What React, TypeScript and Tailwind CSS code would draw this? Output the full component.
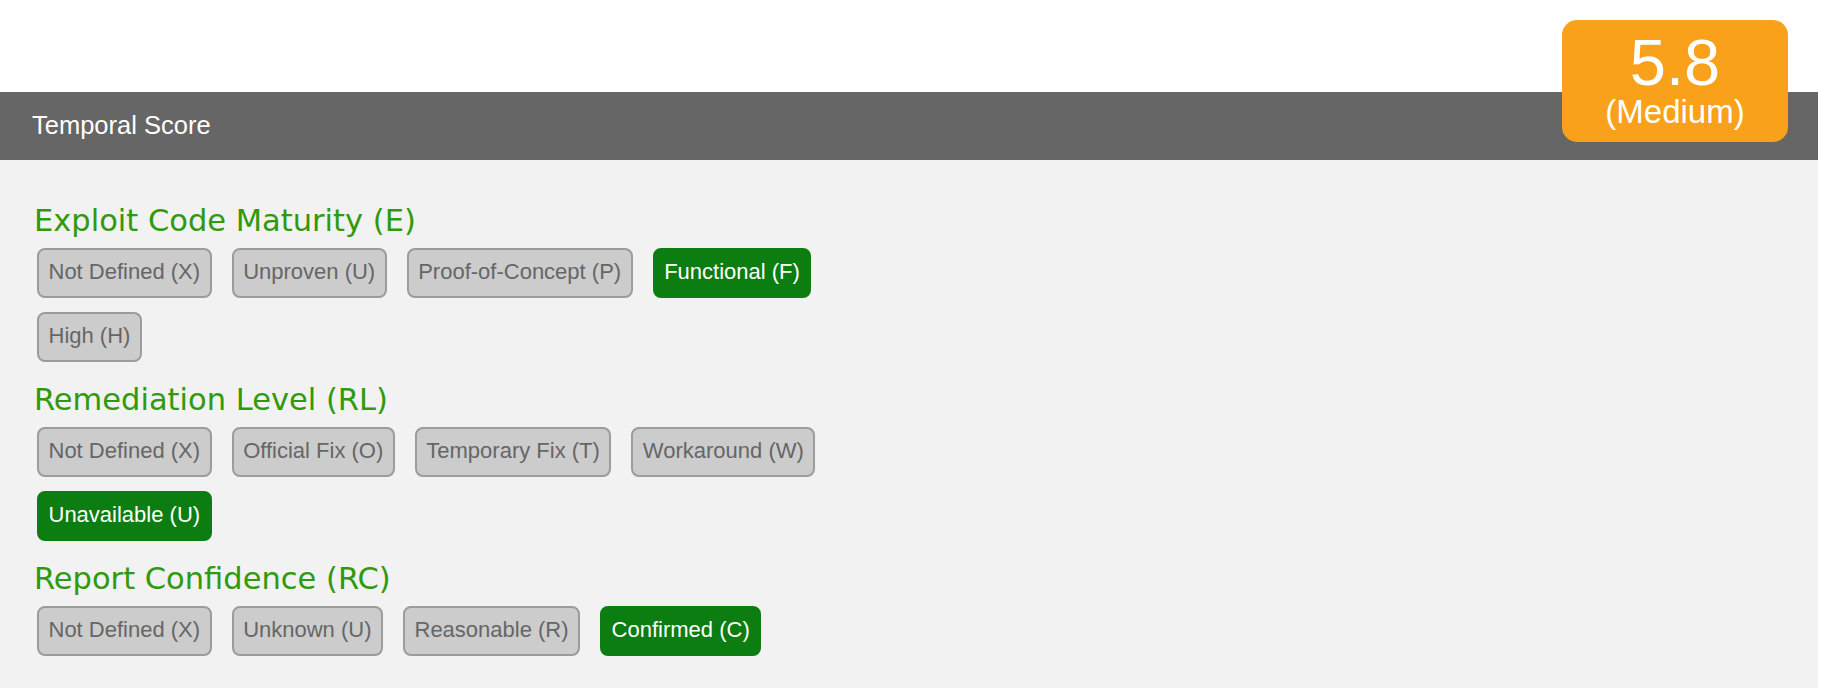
import React from "react";

type Opt = { label: string; active?: boolean };

const sections: { title: string; options: Opt[] }[] = [
  {
    title: "Exploit Code Maturity (E)",
    options: [
      { label: "Not Defined (X)" },
      { label: "Unproven (U)" },
      { label: "Proof-of-Concept (P)" },
      { label: "Functional (F)", active: true },
      { label: "High (H)" },
    ],
  },
  {
    title: "Remediation Level (RL)",
    options: [
      { label: "Not Defined (X)" },
      { label: "Official Fix (O)" },
      { label: "Temporary Fix (T)" },
      { label: "Workaround (W)" },
      { label: "Unavailable (U)", active: true },
    ],
  },
  {
    title: "Report Confidence (RC)",
    options: [
      { label: "Not Defined (X)" },
      { label: "Unknown (U)" },
      { label: "Reasonable (R)" },
      { label: "Confirmed (C)", active: true },
    ],
  },
];

function OptionButton({ label, active }: Opt) {
  return (
    <div
      className={
        active
          ? "flex h-[50.5px] items-center rounded-[8px] border-2 border-[#0c7d10] bg-[#0c7d10] px-[9.5px] pb-[3px] text-[22px] leading-[25px] text-white whitespace-nowrap"
          : "flex h-[50.5px] items-center rounded-[8px] border-2 border-[#9c9c9c] bg-[#cccccc] px-[9.5px] pb-[3px] text-[22px] leading-[25px] text-[#666666] whitespace-nowrap"
      }
    >
      {label}
    </div>
  );
}

export default function App() {
  return (
    <div
      className="relative h-[688px] w-[1834px] overflow-hidden bg-white"
      style={{ fontFamily: '"Liberation Sans", Arial, sans-serif' }}
    >
      <div className="pt-[92px] w-[1818px]">
        <div className="relative h-[68px] bg-[#666666] pl-[32px] pt-[17.5px]">
          <div className="text-[25.5px] leading-[30px] text-white">Temporal Score</div>
          <div className="absolute right-[30px] top-[-72px] flex h-[122px] w-[226px] flex-col items-center rounded-[15px] bg-[#f9a11b] pt-[11px] text-white">
            <div className="text-[65px] leading-[64px]">5.8</div>
            <div className="text-[33px] leading-[33px]">(Medium)</div>
          </div>
        </div>
        <div className="h-[528px] bg-[#f2f2f2] pl-[34px] pt-[42.5px]">
          {sections.map((s, i) => (
            <div key={s.title} className={i === 0 ? "" : "mt-[19.5px]"}>
              <div
                className="mb-[9px] text-[30.5px] leading-[36px] text-[#2f9a0b]"
                style={{ fontFamily: '"DejaVu Sans", Verdana, sans-serif' }}
              >
                {s.title}
              </div>
              <div className="ml-[3px] flex w-[850px] flex-wrap gap-x-[20px] gap-y-[13.5px]">
                {s.options.map((o) => (
                  <OptionButton key={o.label} {...o} />
                ))}
              </div>
            </div>
          ))}
        </div>
      </div>
    </div>
  );
}
